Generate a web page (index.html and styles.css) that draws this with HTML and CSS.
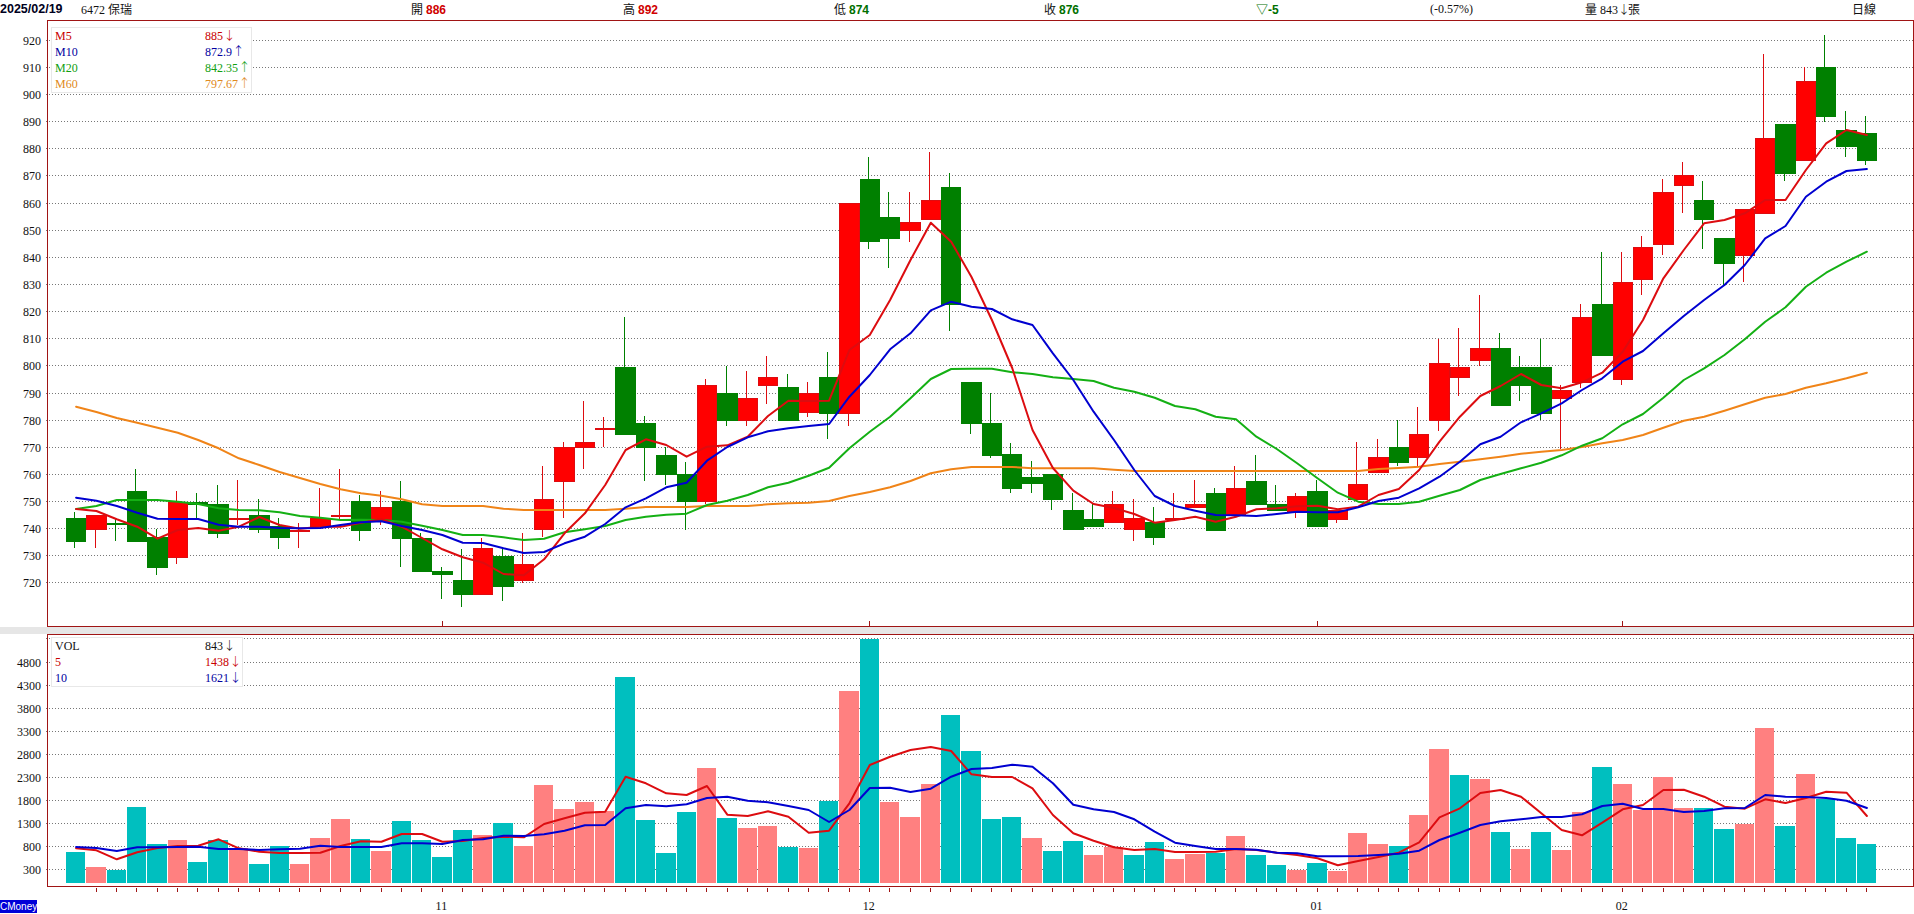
FILE: index.html
```html
<!DOCTYPE html>
<html lang="zh-Hant">
<head>
<meta charset="utf-8">
<title>6472 保瑞 日線</title>
<link rel="stylesheet" href="styles.css">
</head>
<body>
<div class="page">
  <header class="quote-bar">
    <span class="date">2025/02/19</span>
    <span>6472 <i class="cjk">保瑞</i></span>
    <span><i class="cjk">開</i> <b class="up">886</b></span>
    <span><i class="cjk">高</i> <b class="up">892</b></span>
    <span><i class="cjk">低</i> <b class="down">874</b></span>
    <span><i class="cjk">收</i> <b class="down">876</b></span>
    <span><b class="down"><i class="cjk">▽</i>-5</b></span>
    <span>(-0.57%)</span>
    <span><i class="cjk">量</i> 843<i class="arrow">↓</i><i class="cjk">張</i></span>
    <span><i class="cjk">日線</i></span>
  </header>

  <section class="chart chart-price">
    <svg id="price" class="plot plot-price" viewBox="0 20 1914 607" xmlns="http://www.w3.org/2000/svg"></svg>
    <div class="legend legend-price">
      <span class="c-red">M5</span><span class="c-red">885<i class="arrow">↓</i></span>
      <span class="c-blue">M10</span><span class="c-blue">872.9<i class="arrow">↑</i></span>
      <span class="c-green">M20</span><span class="c-green">842.35<i class="arrow">↑</i></span>
      <span class="c-orange">M60</span><span class="c-orange">797.67<i class="arrow">↑</i></span>
    </div>
  </section>

  <div class="strip"></div>

  <section class="chart chart-volume">
    <svg id="volume" class="plot plot-volume" viewBox="0 634 1914 280" xmlns="http://www.w3.org/2000/svg"></svg>
    <div class="legend legend-volume">
      <span>VOL</span><span>843<i class="arrow">↓</i></span>
      <span class="c-red">5</span><span class="c-red">1438<i class="arrow">↓</i></span>
      <span class="c-blue">10</span><span class="c-blue">1621<i class="arrow">↓</i></span>
    </div>
    <div class="brand">CMoney</div>
  </section>
</div>
<script src="chart.js"></script>
</body>
</html>
```
FILE: styles.css
```css
html, body {
  margin: 0;
  padding: 0;
  height: 914px;
  overflow: hidden;
  background: #fff;
}
.page {
  width: 1914px;
  height: 914px;
  overflow: hidden;
  font: 12px/16px "Liberation Serif", "Noto Sans CJK TC", serif;
  color: #111;
}
.quote-bar {
  display: grid;
  grid-template-columns: 81px 330px 212px 211px 210px 212px 174px 155px 267px 1fr;
  height: 20px;
  line-height: 18px;
  white-space: nowrap;
}
.date {
  font: bold 12.5px/18px "Liberation Sans", sans-serif;
  color: #000020;
}
.quote-bar b {
  font: bold 12px/18px "Liberation Sans", sans-serif;
}
.cjk, .arrow {
  font-family: "Noto Sans CJK TC", sans-serif;
  font-style: normal;
  font-size: 12px;
}
.arrow {
  display: inline-block;
  width: 13px;
  text-align: center;
  font-weight: 300;
  line-height: 14px;
}
.quote-bar .arrow {
  width: 10px;
}
.up { color: #d00000; }
.down { color: #007000; }
.chart {
  position: relative;
}
.chart-price { height: 607px; }
.chart-volume { height: 280px; }
.plot {
  display: block;
  width: 1914px;
  height: 100%;
  font: 12px "Liberation Serif", serif;
}
.strip {
  height: 7px;
  background: #e6e6e6;
}
.legend {
  position: absolute;
  left: 51px;
  display: grid;
  grid-template-columns: 150px 1fr;
  grid-auto-rows: 16px;
  padding-left: 3px;
  box-sizing: border-box;
  background: #fff;
  border: 1px solid #e8e8e8;
  white-space: nowrap;
}
.legend-price {
  top: 7px;
  width: 201px;
  height: 66px;
}
.legend-volume {
  top: 3px;
  width: 192px;
  height: 50px;
  color: #111;
}
.c-red { color: #c80000; }
.c-blue { color: #0000a0; }
.c-green { color: #10a010; }
.c-orange { color: #e08a20; }
.brand {
  position: absolute;
  left: 0;
  bottom: 1px;
  width: 37px;
  height: 13px;
  overflow: hidden;
  background: #0000d8;
  color: #fff;
  font: 10px/13px "Liberation Sans", sans-serif;
  white-space: nowrap;
}
.grid { stroke: #777; stroke-width: 1; stroke-dasharray: 1 2; }
.frame { fill: none; stroke: #a01414; stroke-width: 1; shape-rendering: crispEdges; }
.tick { stroke: #a01414; stroke-width: 1; shape-rendering: crispEdges; }
.wick { stroke-width: 1; shape-rendering: crispEdges; }
.body { shape-rendering: crispEdges; }
.line { fill: none; stroke-width: 2; stroke-linejoin: round; stroke-linecap: round; }
.axis { fill: #111; text-anchor: end; }
.month { fill: #111; text-anchor: middle; }
.s-red { stroke: #de0c10; fill: #ff0000; }
.s-green { stroke: #008000; fill: #008000; }
.f-teal { fill: #00bfbf; }
.f-pink { fill: #ff8080; }
.l-m5 { stroke: #dc0c10; }
.l-m10 { stroke: #0000d0; }
.l-m20 { stroke: #14b014; }
.l-m60 { stroke: #f08418; }
```
FILE: chart.js
```js
var NS = 'http://www.w3.org/2000/svg';
// open, high, low, close
var candles = [
[744,746,733,735.5],[740,745,733,745],[742,743.5,735.5,741.9],[754,762,735.5,735.5],[737,740,723,726],
[729.5,754,727,749.7],[750,753,743.5,749],[749,756,736.5,738.5],[743.7,758,741.5,744],[745,751,738.5,740],
[741,744,732.5,737],[739.4,742,733,739.5],[741,755,741,744],[744.9,762,743.5,745],[750.3,752.5,735.5,739.5],
[743.5,754,741.5,748],[750.3,757.5,726,736.5],[736.5,738.5,724.3,724.3],[724.5,726,714,723.3],[721,732.5,711,716],
[716,736.5,716,733],[730,733,713.5,719],[721,738.5,720,727],[740,763,737,751],[757.5,772,744,770],
[770,787,762,772],[776.9,781,770,777],[799.5,818,775,775],[779,781.5,757.5,770],[767,770,756,760.3],
[760.3,764.5,739.5,750.3],[750.3,795,749,793],[790,800,778,780],[780,798,778,788],[793,803.5,786,796],
[792.3,797,780,780],[783,794,781,790],[796,805,773,782.5],[782.5,860,778,860],[869,877,843,846],
[855,864,836,847],[850,864,845.5,853],[854,879,854,861],[866,871,813,823],[794,794,775,779],
[779,790,766,767],[767.5,771.5,753,755],[759,765,753,757],[760.3,760.3,747,751],[747,753,740,740],
[743.5,749,741,741],[742.5,754,742.5,749],[740,751,735.5,744],[742.5,748,734,737],[743.8,753,743.5,744],
[748,758,748,749],[753,755,739.5,739.5],[745,763,745,755],[757.5,767,749,749],[749,756,747,747],
[746.5,753,744,752],[754,758,741,741],[743.5,747,742,747],[751,772,751,756.5],[761,773,761,766.5],
[770,780,763,764.5],[766.5,785,763,775],[780,810,776,801],[796,814,789,799.5],[802,826,800,806.5],
[806.5,812,785.7,785.7],[799.5,803.5,787,793],[799.5,810,780,782.5],[788,793,769.5,791],[794,823,792,818],
[823,842,804,804],[795,842,793,831],[832,848,826,844],[845,869,841,864],[866.5,875,856.5,870.5],
[861,868,843,854],[847,847,830,838],[841,858,831,858],[856.5,915,856.5,884],[889,889,868,871],
[876,910,876,905],[910,922,890,892],[887,894,877,881],[886,892,874,876]
];
var volumes = [674,348,283,1652,848,935,456,935,761,413,804,413,978,1391,956,696,1348,935,565,1152,1043,1304,804,2130,1609,1761,1565,4478,1370,652,1543,2500,1413,1196,1239,783,761,1783,4174,5304,1761,1435,2152,3652,2870,1391,1435,978,696,913,609,783,609,891,522,630,652,1022,609,391,283,435,261,1087,848,804,1478,2913,2348,2261,1109,739,1109,717,1543,2522,2152,1587,2304,1630,1630,1174,1283,3369,1239,2370,1826,978,848];
var volKinds = 'TPTTTPTTPTTPPPTPTTTTPTPPPPPTTTTPTPPTPTPTPPPTTTTPTTPPTTPPTPTTPTPPPTPPTPTPTPPTPPPPTTPPTPTTT';
// moving averages, as plotted screen heights
var m5 = [509,511,519.3,526.7,538.7,530,528,530.7,526.7,517,525,528.7,526.7,526.7,522.7,519.3,526.7,538,549.3,557.3,562.7,574,575.3,559.3,533.3,513.3,485,450,439.3,445,456.7,446.7,445.3,436.7,416,400.7,401,400.7,350,335,300,260,222.7,241.7,277,320,368,430,468,490.7,504,508,514,522.7,520,516.7,521.7,516.7,509.3,508.3,506.3,505.7,509.3,506.7,495,489,470,441.7,416.7,396,386,374,385,388.3,382.3,372.7,351.7,320,278.3,250,223.3,220,213.3,200,200,170,143.3,130,135];
var m10 = [497.7,500.7,506,512.7,518.7,519,519,524.7,526.7,526.7,528,528.3,528,525,522.3,521.3,526,530,535,542.7,543,548.3,553,552,543.3,536.7,524,507.3,498.3,487.3,482.7,460.7,447,437.3,431.3,428.3,426,424,396.7,375,349.3,333.3,310.3,301.7,306.7,309,319.3,325,353.3,380,411.7,440,470,496,506,510.7,515,515.3,516,514,511.7,512.3,512.3,507.3,501,497.7,488.3,476.7,461.7,444.3,436.7,422.3,413.3,403.3,390,378.3,361.7,351,333.3,316,300,285,265,238.3,226,196.7,181.7,171,169];
var m20 = [509,506,500,500,500,501.7,504,508.3,510,510.3,512.3,516,517.7,520,519.7,520,521.7,525.7,530,535,535,537.3,540,538.7,532.3,529.3,526,520,516.7,514.7,513.7,505,500.7,495,487.3,482.7,475.7,467.7,448.3,431.7,416.7,398.3,379,369,368.7,368.7,372.3,374,377.3,379,381,387.7,391.7,397.7,406,409.3,416.7,419.3,436.7,449,463.3,478.3,492.7,501.7,504,504,501.7,495.7,490,480,474,468.3,462.7,455.3,445.7,438.3,424.3,414,397.7,380,368.3,355,339.3,321.7,307.3,286.7,272.7,261.7,251.7];
var m60 = [406.7,412,418,422.7,427.7,432.7,440,448.3,458.3,465,472,478,484,489.3,493.3,495.7,499.3,504.3,506,506,506,508.7,510,510,510,510,510,508.7,507,507,507,506,506,506,504.3,503.3,502.7,501,496,492,487.3,481,473.3,469.3,467,467,467,468.3,468.3,468.3,468.3,469.7,471,471,471,471,471,471,471,471,471,471,471,471,469,468,466.7,464,461.7,459.3,456.7,453.7,451.7,450,447,443.3,440,435,427.7,420.7,416.7,410.7,404.3,397.7,394,387.7,383.3,378.3,372.7];
var v5 = [848.3,850.3,859.3,852.3,848,846,845.7,839.3,848.3,851.7,853,853,852.7,846,841.3,841.7,834,834,841.7,841,838,836.7,837.3,824,818.3,812.7,811.7,776.7,783.3,793.3,795,786,814.7,816,811.3,816.7,832.7,830.7,803.3,765,756.7,750,747,751,774.3,777,777,788.3,815,833.3,840.7,847.3,850,849,852,852,851.7,849,850,852.7,855,858.3,865.3,861,857,852.7,842.3,817.3,808.3,793,790,796.7,813.3,830,835.3,822.7,809.3,805,790,789.7,796.7,806.7,808.7,799.3,803,798,791.7,792.7,816];
var v10 = [847,848,851,847.3,847.3,847,846.7,849,849,850,849.3,848.7,845.7,847,847,847,843.3,843.3,844,840,839.3,835.7,836,834.3,830.7,825.3,825,808.3,805,806.3,804.3,798,796.7,800.7,802.3,806,810,822,810,788,787.7,792,788.7,776.7,769,768,764.7,766.7,783.3,804.7,809.3,812,819.3,831.7,842.7,846,849,849,849.7,852.7,853.3,856.3,856.3,856,855,853.7,850.7,840,832.7,825,821.3,819.3,817,817,814.3,806,803.7,809,809,812,811,808.3,808,795,796.7,797,798,800.7,808];

var STEP = 20.35, X0 = 76.1, LEFT = 47.5, RIGHT = 1913.5;
function cx(i) { return X0 + STEP * i; }
function bodyLeft(i) { return Math.round(66 + STEP * i); }
function bodyRight(i) { return Math.round(66 + STEP * (i + 1)) - 1; }
function wickX(i) { return Math.floor((bodyLeft(i) + bodyRight(i)) / 2) - 0.5; }
function py(p) { return 40.3 + (920 - p) * 2.7135; }
function vy(v) { return 883.1 - v * 0.046; }

function add(svg, tag, attrs, text) {
  var el = document.createElementNS(NS, tag);
  for (var k in attrs) el.setAttribute(k, attrs[k]);
  if (text !== undefined) el.textContent = text;
  svg.appendChild(el);
  return el;
}
function gridRow(svg, y, label) {
  var yy = Math.floor(y) + 0.5;
  add(svg, 'line', { x1: 46, x2: RIGHT, y1: yy, y2: yy, 'class': 'grid' });
  add(svg, 'text', { x: 41, y: yy + 4, 'class': 'axis' }, label);
}
function polyline(svg, ys, cls) {
  var pts = ys.map(function (y, i) { return cx(i).toFixed(1) + ',' + y; }).join(' ');
  add(svg, 'polyline', { points: pts, 'class': 'line ' + cls });
}

var months = { 18: '11', 39: '12', 61: '01', 76: '02' };
var price = document.getElementById('price');
for (var p = 920; p >= 720; p -= 10) gridRow(price, py(p), String(p));
add(price, 'rect', { x: LEFT, y: 20.5, width: RIGHT - LEFT - 0.5, height: 605.5, 'class': 'frame' });
Object.keys(months).forEach(function (i) {
  var x = wickX(+i) + 0.5;
  add(price, 'line', { x1: x, x2: x, y1: 621, y2: 626, 'class': 'tick' });
});
candles.forEach(function (c, i) {
  var up = c[3] >= c[0];
  var cls = up ? 's-red' : 's-green';
  var top = py(Math.max(c[0], c[3])), bot = py(Math.min(c[0], c[3]));
  var wx = wickX(i);
  add(price, 'line', { x1: wx, x2: wx, y1: Math.round(py(c[1])), y2: Math.round(py(c[2])), 'class': 'wick ' + cls });
  var t = Math.round(top), h = Math.max(1, Math.round(bot) - t);
  add(price, 'rect', { x: bodyLeft(i), y: t, width: bodyRight(i) - bodyLeft(i), height: h, 'class': 'body ' + cls, stroke: 'none' });
});
polyline(price, m60, 'l-m60');
polyline(price, m20, 'l-m20');
polyline(price, m5, 'l-m5');
polyline(price, m10, 'l-m10');

var vol = document.getElementById('volume');
add(vol, 'line', { x1: 46, x2: RIGHT, y1: 638.5, y2: 638.5, 'class': 'grid' });
for (var v = 4800; v >= 300; v -= 500) gridRow(vol, vy(v), String(v));
add(vol, 'rect', { x: LEFT, y: 634.5, width: RIGHT - LEFT - 0.5, height: 252, 'class': 'frame' });
volumes.forEach(function (q, i) {
  var t = Math.round(vy(q));
  add(vol, 'rect', { x: bodyLeft(i), y: t, width: bodyRight(i) - bodyLeft(i), height: 883 - t, 'class': 'body ' + (volKinds[i] === 'T' ? 'f-teal' : 'f-pink') });
  if (i > 0) {
    var x = wickX(i) + 0.5;
    add(vol, 'line', { x1: x, x2: x, y1: 888, y2: 892, 'class': 'tick' });
  }
});
polyline(vol, v5, 'l-m5');
polyline(vol, v10, 'l-m10');
Object.keys(months).forEach(function (i) {
  add(vol, 'text', { x: cx(+i) - 1, y: 909.5, 'class': 'month' }, months[i]);
});
add(vol, 'text', { x: cx(61) - 1, y: 921.5, 'class': 'month' }, '2025');
```
